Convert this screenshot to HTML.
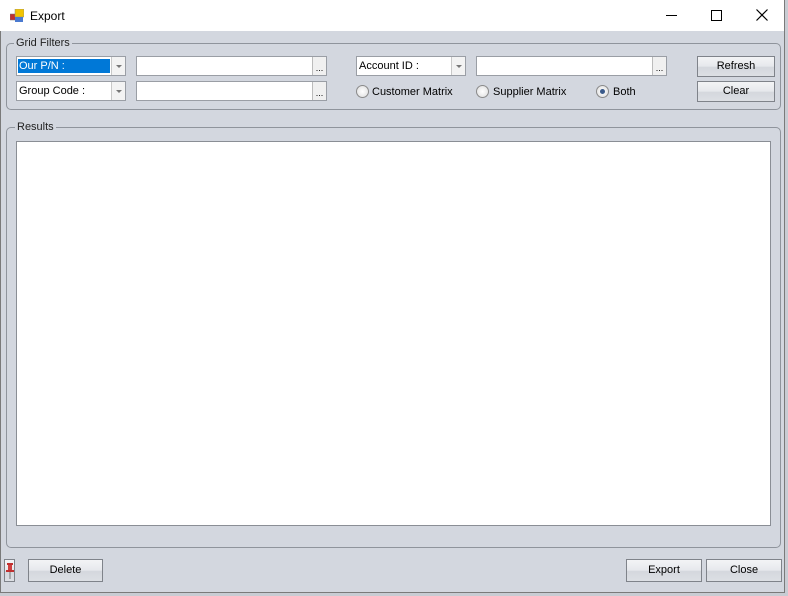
<!DOCTYPE html>
<html><head><meta charset="utf-8"><style>
*{box-sizing:border-box;margin:0;padding:0}
body{width:788px;height:596px;overflow:hidden;background:#c8ccd3;font-family:"Liberation Sans",sans-serif;font-size:11px;color:#000;position:relative}
.win{position:absolute;left:0;top:0;width:785px;height:593px;background:#d3d7df}
.bl{position:absolute;background:#7a7a7a}
.title{position:absolute;left:0;top:0;width:784px;height:31px;background:#fff}
.a{position:absolute}
.grp{position:absolute;border:1px solid #8f949c;border-radius:5px}
.lbl{position:absolute;background:#d3d7df;padding:0 2px;color:#222}
.combo{position:absolute;background:#fff;border:1px solid #9a9ea5;height:20px}
.combo .arr{position:absolute;right:0;top:0;width:14px;height:18px;border-left:1px solid #c8c8c8;background:#f3f3f3}
.combo .arr:after{content:"";position:absolute;left:4px;top:8px;border:3px solid transparent;border-top:3px solid #777;border-bottom:none}
.combo span{position:absolute;left:1px;top:2px;line-height:14px;padding:0 1px}
.tb{position:absolute;background:#fff;border:1px solid #9a9ea5;height:20px}
.tb .dots{position:absolute;right:0;top:0;width:14px;height:18px;border-left:1px solid #bbb;background:#f0f0f0;font-size:9px;text-align:center;line-height:22px}
.btn{position:absolute;border:1px solid #7f838a;background:linear-gradient(#f3f4f6,#e6e8ec 50%,#d4d7dd 52%,#dcdfe4);text-align:center;line-height:18px}
.radio{position:absolute;width:13px;height:13px;border-radius:50%;border:1px solid #8a8a8a;background:radial-gradient(#fff,#dcdcdc)}
.rt{position:absolute}
</style></head><body>
<div class="win">
<div class="title">
<svg class="a" style="left:10px;top:9px" width="14" height="14"><rect x="0" y="5" width="6" height="6" fill="#c03030" stroke="#777" stroke-width=".5"/><rect x="5" y="0" width="9" height="8" fill="#f2c400" stroke="#888" stroke-width=".5"/><rect x="5" y="8" width="8" height="5" fill="#4a7ad0"/></svg>
<div class="a" style="left:30px;top:9px;font-size:12px">Export</div>
<div class="a" style="left:666px;top:15px;width:11px;height:1px;background:#000"></div>
<div class="a" style="left:711px;top:10px;width:11px;height:11px;border:1px solid #000"></div>
<svg class="a" style="left:756px;top:9px" width="12" height="12"><path d="M0.5 0.5L11.5 11.5M11.5 0.5L0.5 11.5" stroke="#000" stroke-width="1.2"/></svg>
</div>
<div class="bl" style="left:0;top:31px;width:1px;height:562px"></div>
<div class="bl" style="left:784px;top:0;width:1px;height:593px"></div>
<div class="bl" style="left:0;top:592px;width:785px;height:1px"></div>

<div class="grp" style="left:6px;top:43px;width:775px;height:67px"></div>
<div class="lbl" style="left:14px;top:37px">Grid Filters</div>
<div class="combo" style="left:16px;top:56px;width:110px"><span style="background:#0078d7;color:#fff;width:92px">Our P/N :</span><div class="arr"></div></div>
<div class="combo" style="left:16px;top:81px;width:110px"><span>Group Code :</span><div class="arr"></div></div>
<div class="tb" style="left:136px;top:56px;width:191px"><div class="dots">...</div></div>
<div class="tb" style="left:136px;top:81px;width:191px"><div class="dots">...</div></div>
<div class="combo" style="left:356px;top:56px;width:110px"><span>Account ID :</span><div class="arr"></div></div>
<div class="tb" style="left:476px;top:56px;width:191px"><div class="dots">...</div></div>
<div class="btn" style="left:697px;top:56px;width:78px;height:21px">Refresh</div>
<div class="btn" style="left:697px;top:81px;width:78px;height:21px">Clear</div>
<div class="radio" style="left:356px;top:85px"></div><div class="rt" style="left:372px;top:86px">Customer Matrix</div>
<div class="radio" style="left:476px;top:85px"></div><div class="rt" style="left:493px;top:86px">Supplier Matrix</div>
<div class="radio" style="left:596px;top:85px"><div class="a" style="left:3px;top:3px;width:5px;height:5px;border-radius:50%;background:#3a5a8a"></div></div><div class="rt" style="left:613px;top:86px">Both</div>

<div class="grp" style="left:6px;top:127px;width:775px;height:421px"></div>
<div class="lbl" style="left:15px;top:121px">Results</div>
<div class="a" style="left:16px;top:141px;width:755px;height:385px;background:#fff;border:1px solid #8a8e95"></div>

<div class="btn" style="left:4px;top:559px;width:11px;height:23px"><svg class="a" style="left:1px;top:2px" width="8" height="18"><rect x="1" y="1" width="6" height="2" fill="#c03030"/><rect x="2" y="3" width="4" height="5" fill="#d04040"/><rect x="0" y="8" width="8" height="2" fill="#c03030"/><line x1="4" y1="10" x2="4" y2="17" stroke="#777"/></svg></div>
<div class="btn" style="left:28px;top:559px;width:75px;height:23px;line-height:21px">Delete</div>
<div class="btn" style="left:626px;top:559px;width:76px;height:23px;line-height:21px">Export</div>
<div class="btn" style="left:706px;top:559px;width:76px;height:23px;line-height:21px">Close</div>
</div>
</body></html>
